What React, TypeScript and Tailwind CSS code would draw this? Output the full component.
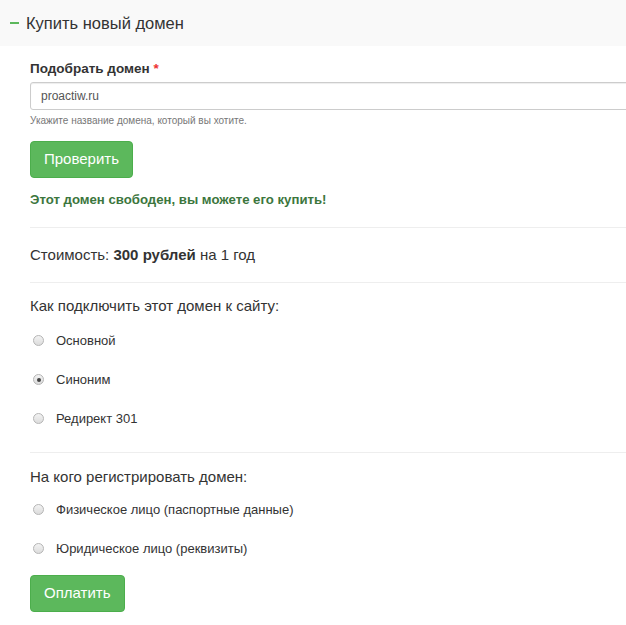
const Radio = ({ label, checked }: { label: string; checked?: boolean }) => (
  <label className="flex items-center h-[39px] text-[13px] text-[#333]">
    <span className="ml-[3px] mr-[12px] w-[11px] h-[11px] rounded-full border border-[#b5b5b5] bg-gradient-to-b from-[#f3f3f3] to-[#dcdcdc] flex items-center justify-center">
      {checked && <span className="w-[4px] h-[4px] rounded-full bg-[#444]" />}
    </span>
    {label}
  </label>
);

export default function App() {
  return (
    <div className="w-[626px] h-[625px] overflow-hidden bg-white font-['Liberation_Sans',Arial,sans-serif] text-[#333]">
      <div className="h-[46px] bg-[#f9f9f9] flex items-center pl-[10px]">
        <span className="w-[9px] h-[1.5px] bg-[#5cb85c] mr-[7px]" />
        <span className="text-[16.5px]">Купить новый домен</span>
      </div>

      <div className="pl-[30px] w-[660px]">
        <div className="pt-[14px] text-[13.5px] font-bold leading-[18px]">
          Подобрать домен <span className="text-[#e33]">*</span>
        </div>
        <div className="mt-[4px] h-[28px] border border-[#ccc] rounded-[3px] flex items-center pl-[10px] text-[12px] text-[#555] shadow-[inset_0_1px_1px_rgba(0,0,0,0.075)]">
          proactiw.ru
        </div>
        <div className="mt-[5px] text-[10px] text-[#777] leading-[12px]">Укажите название домена, который вы хотите.</div>
        <button className="mt-[14px] h-[37px] px-[13px] bg-[#5cb85c] border border-[#4cae4c] rounded-[4px] text-white text-[15px]">
          Проверить
        </button>
        <div className="mt-[15px] text-[13.2px] font-bold text-[#3c763d] leading-[14px]">
          Этот домен свободен, вы можете его купить!
        </div>
        <div className="mt-[20px] border-t border-[#eee]" />
        <div className="mt-[17px] text-[15px] leading-[20px]">
          Стоимость: <b>300 рублей</b> на 1 год
        </div>
        <div className="mt-[17px] border-t border-[#eee]" />
        <div className="mt-[13px] text-[15px] leading-[20px]">Как подключить этот домен к сайту:</div>
        <div className="mt-[5px] flex flex-col">
          <Radio label="Основной" />
          <Radio label="Синоним" checked />
          <Radio label="Редирект 301" />
        </div>
        <div className="mt-[14px] border-t border-[#eee]" />
        <div className="mt-[14px] text-[15px] leading-[20px]">На кого регистрировать домен:</div>
        <div className="mt-[3px] flex flex-col">
          <Radio label="Физическое лицо (паспортные данные)" />
          <Radio label="Юридическое лицо (реквизиты)" />
        </div>
        <button className="mt-[7px] h-[37px] px-[13px] bg-[#5cb85c] border border-[#4cae4c] rounded-[4px] text-white text-[15px]">
          Оплатить
        </button>
      </div>
    </div>
  );
}
